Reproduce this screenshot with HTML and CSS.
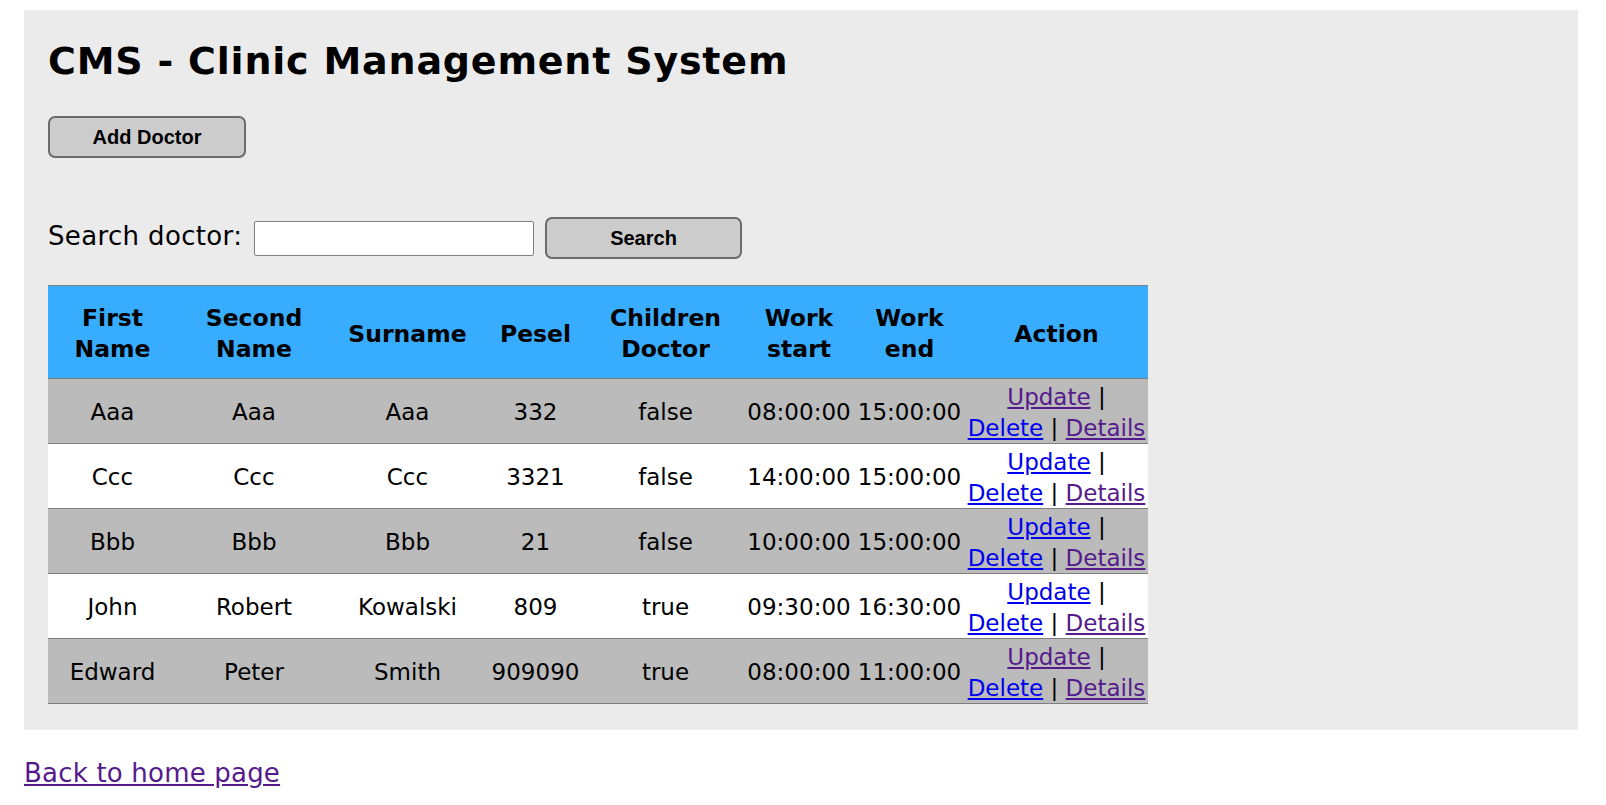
FILE: index.html
```html
<!DOCTYPE html>
<html lang="en">
<head>
<meta charset="utf-8">
<title>CMS - Clinic Management System</title>
<link rel="stylesheet" href="styles.css">
</head>
<body>
<div class="panel">
  <h1 class="title">CMS - Clinic Management System</h1>
  <button class="btn" type="button">Add Doctor</button>
  <form class="search">
    <label class="search-label" for="q">Search doctor:</label>
    <input class="search-input" id="q" type="text">
    <button class="btn" type="button">Search</button>
  </form>
  <table class="doctors">
    <colgroup>
      <col class="c1"><col class="c2"><col class="c3"><col class="c4"><col class="c5"><col class="c6"><col class="c7"><col class="c8">
    </colgroup>
    <thead>
      <tr>
        <th>First Name</th><th>Second Name</th><th>Surname</th><th>Pesel</th><th>Children Doctor</th><th>Work start</th><th>Work end</th><th>Action</th>
      </tr>
    </thead>
    <tbody>
      <tr class="odd">
        <td>Aaa</td><td>Aaa</td><td>Aaa</td><td>332</td><td>false</td><td>08:00:00</td><td>15:00:00</td>
        <td class="act"><a class="lnk visited" href="#">Update</a> |<br><a class="lnk" href="#">Delete</a> | <a class="lnk visited" href="#">Details</a></td>
      </tr>
      <tr>
        <td>Ccc</td><td>Ccc</td><td>Ccc</td><td>3321</td><td>false</td><td>14:00:00</td><td>15:00:00</td>
        <td class="act"><a class="lnk" href="#">Update</a> |<br><a class="lnk" href="#">Delete</a> | <a class="lnk visited" href="#">Details</a></td>
      </tr>
      <tr class="odd">
        <td>Bbb</td><td>Bbb</td><td>Bbb</td><td>21</td><td>false</td><td>10:00:00</td><td>15:00:00</td>
        <td class="act"><a class="lnk" href="#">Update</a> |<br><a class="lnk" href="#">Delete</a> | <a class="lnk visited" href="#">Details</a></td>
      </tr>
      <tr>
        <td>John</td><td>Robert</td><td>Kowalski</td><td>809</td><td>true</td><td>09:30:00</td><td>16:30:00</td>
        <td class="act"><a class="lnk" href="#">Update</a> |<br><a class="lnk" href="#">Delete</a> | <a class="lnk visited" href="#">Details</a></td>
      </tr>
      <tr class="odd">
        <td>Edward</td><td>Peter</td><td>Smith</td><td>909090</td><td>true</td><td>08:00:00</td><td>11:00:00</td>
        <td class="act"><a class="lnk visited" href="#">Update</a> |<br><a class="lnk" href="#">Delete</a> | <a class="lnk visited" href="#">Details</a></td>
      </tr>
    </tbody>
  </table>
</div>
<p class="back"><a class="lnk visited" href="#">Back to home page</a></p>
</body>
</html>
```

FILE: styles.css
```css
html, body {
  background: #ffffff;
}
body {
  margin: 10px 28px 0 24px;
  font-family: "DejaVu Sans", Verdana, sans-serif;
  color: #000;
}
.panel {
  background: #ebebeb;
  padding: 30px 24px 26px 24px;
}
.title {
  margin: 0 0 33px 0;
  font-size: 38px;
  line-height: 43px;
  font-weight: bold;
  letter-spacing: 0.8px;
}
.btn {
  display: block;
  box-sizing: border-box;
  width: 198px;
  height: 42px;
  padding: 0;
  background: #cccccc;
  border: 2px solid #6b6b6b;
  border-radius: 7px;
  font-family: "Liberation Sans", Arial, sans-serif;
  font-weight: bold;
  font-size: 20px;
  color: #000;
}
.search {
  display: flex;
  align-items: baseline;
  margin: 59px 0 0 0;
}
.search-label {
  font-size: 26px;
  letter-spacing: 0.35px;
  width: 206px;
  flex: none;
}
.search-input {
  box-sizing: border-box;
  width: 280px;
  height: 35px;
  margin: 0 11px 0 0;
  border: 1px solid #808080;
  border-radius: 2px;
  background: #fff;
  font-family: "Liberation Sans", Arial, sans-serif;
  font-size: 20px;
  padding: 0 4px;
}
.search .btn {
  width: 197px;
}
.doctors {
  margin-top: 26px;
  border-collapse: collapse;
  table-layout: fixed;
  width: 1100px;
  font-size: 23px;
  line-height: 30.5px;
}
.c1 { width: 129px; }
.c2 { width: 154px; }
.c3 { width: 153px; }
.c4 { width: 103px; }
.c5 { width: 157px; }
.c6 { width: 110px; }
.c7 { width: 111px; }
.c8 { width: 183px; }
.doctors thead tr {
  background: #38acff;
  border-top: 1px solid #7f7f7f;
  border-bottom: 1px solid #7f7f7f;
}
.doctors th {
  padding: 17px 1px 13px 1px;
  font-size: 23.5px;
  line-height: 31px;
  font-weight: bold;
  text-align: center;
  vertical-align: middle;
}
.doctors tbody tr {
  background: #ffffff;
  border-bottom: 1px solid #7f7f7f;
}
.doctors tbody tr.odd {
  background: #bbbbbb;
}
.doctors td {
  padding: 3px 0 0 0;
  text-align: center;
  vertical-align: middle;
  white-space: nowrap;
}
.lnk {
  color: #0000ee;
  text-decoration: underline;
}
.lnk.visited {
  color: #551a8b;
}
.back {
  margin: 28px 0 0 0;
  font-size: 26px;
  letter-spacing: 0.2px;
}
```
